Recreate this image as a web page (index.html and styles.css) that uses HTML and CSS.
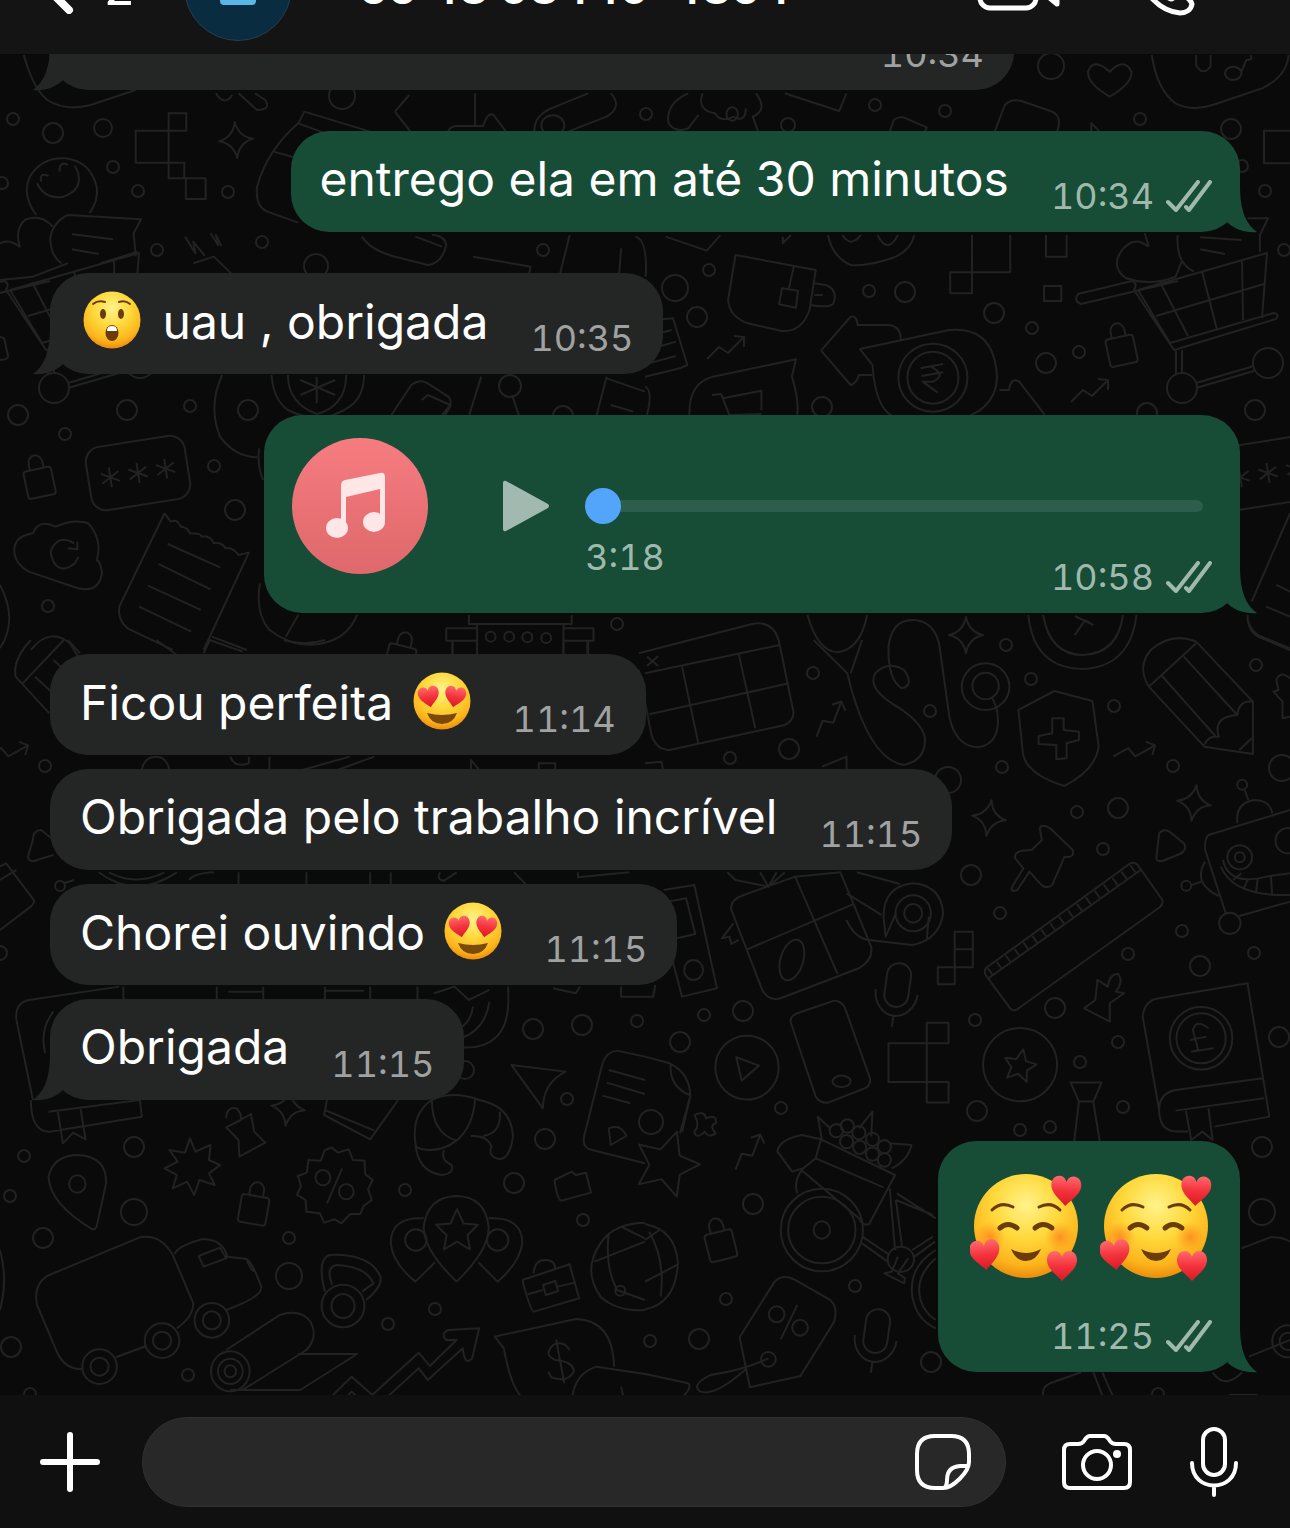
FILE: index.html
```
<!DOCTYPE html>
<html lang="pt-BR">

<head>
    <meta charset="UTF-8">
    <meta name="viewport" content="width=device-width, initial-scale=1">
    <title>Chat</title>
    <link rel="stylesheet" href="styles.css">
</head>

<body>
    <!-- shared shapes -->
    <svg class="defs" width="0" height="0" aria-hidden="true">
        <defs>
            <radialGradient id="face" cx="50%" cy="30%" r="72%">
                <stop offset="0" stop-color="#fff38a" />
                <stop offset="0.45" stop-color="#ffd83a" />
                <stop offset="0.8" stop-color="#fcb41c" />
                <stop offset="1" stop-color="#e8860c" />
            </radialGradient>
            <radialGradient id="blush">
                <stop offset="0" stop-color="#ff7a1a" stop-opacity="0.7" />
                <stop offset="1" stop-color="#ff8a1a" stop-opacity="0" />
            </radialGradient>
            <linearGradient id="red" x1="0" y1="0" x2="0" y2="1">
                <stop offset="0" stop-color="#ff6a6e" />
                <stop offset="0.5" stop-color="#f4323c" />
                <stop offset="1" stop-color="#d81a26" />
            </linearGradient>
            <path id="heart" fill="url(#red)" d="M0 15C-5 9-15 3-15-6C-15-12-11-15-7-15C-3-15-1-12 0-9C1-12 3-15 7-15C11-15 15-12 15-6C15 3 5 9 0 15Z" />
            <symbol id="astonished" viewBox="0 0 58 58">
                <circle cx="29" cy="29" r="28.5" fill="url(#face)" />
                <g fill="none" stroke="#6b3c0a" stroke-width="2" stroke-linecap="round">
                    <path d="M10 13Q15 9 22 11" />
                    <path d="M36 11Q42 9 47 13" />
                </g>
                <ellipse cx="20" cy="23" rx="3" ry="5" fill="#6b3c0a" />
                <ellipse cx="38" cy="23" rx="3" ry="5" fill="#6b3c0a" />
                <ellipse cx="29" cy="42" rx="6.5" ry="8" fill="#6b3c0a" />
                <path d="M24 40Q24 35 29 35Q34 35 34 40Z" fill="#fff" />
            </symbol>
            <symbol id="heart-eyes" viewBox="0 0 58 58">
                <circle cx="29" cy="29" r="28.5" fill="url(#face)" />
                <use href="#heart" transform="translate(16 25) rotate(-10) scale(.7)" />
                <use href="#heart" transform="translate(42 25) rotate(10) scale(.7)" />
                <path d="M14 41Q29 45 44 41Q40 52 29 52Q18 52 14 41Z" fill="#7a4a0c" />
            </symbol>
            <symbol id="love" viewBox="0 0 112 108">
                <circle cx="56" cy="52" r="52" fill="url(#face)" />
                <circle cx="20" cy="63" r="15" fill="url(#blush)" />
                <circle cx="90" cy="63" r="15" fill="url(#blush)" />
                <g fill="none" stroke="#6b3c0a" stroke-linecap="round">
                    <path d="M22 36Q31 27 43 33" stroke-width="3" />
                    <path d="M69 33Q81 27 90 36" stroke-width="3" />
                    <path d="M30 54Q38 47 47 54" stroke-width="5" />
                    <path d="M65 54Q73 47 82 54" stroke-width="5" />
                </g>
                <path d="M41 75Q56 83 71 75Q66 87 56 87Q46 87 41 75Z" fill="#6b3c0a" />
                <use href="#heart" transform="translate(96 17) rotate(3)" />
                <use href="#heart" transform="translate(15 81) rotate(-6)" />
                <use href="#heart" transform="translate(92 92)" />
            </symbol>
            <symbol id="ticks" viewBox="0 0 46 32">
                <path d="M2 22L10 30L32 2M20 27L23 30L44 2" fill="none" stroke="currentColor" stroke-width="4" stroke-linecap="round" stroke-linejoin="round" />
            </symbol>
            <symbol id="tail" viewBox="0 0 32 48">
                <path d="M15 0C15 24 20 38 32 47C21 48 10 45 2 37L0 20Z" fill="currentColor" />
            </symbol>
            <!-- wallpaper pieces that repeat -->
            <g id="cart">
                <path d="M1178 281L1081 304Q1073 301 1078 294L1132 281Q1138 283 1134 290L1174 350L1276 319Q1280 314 1274 313L1170 343L1138 290M1138 290L1267 253L1262 318M1160 282L1188 336M1202 271L1217 330M1242 260L1243 320M1156 316L1264 284" />
                <path d="M1176 351V374M1182 350V373M1196 383L1254 366M1196 388L1254 371" />
                <circle cx="1182" cy="388" r="15" />
                <circle cx="1268" cy="363" r="15" />
            </g>
            <g id="lock">
                <rect x="-14" y="-6" width="28" height="28" rx="3" />
                <path d="M-7-6V-12A7 8 0 0 1 7-12V-6" />
            </g>
            <path id="spark" d="M0-18Q3-3 17 0Q3 3 0 18Q-3 3-17 0Q-3-3 0-18Z" />
            <path id="trend" d="M-19 12L-7 0L2 6L18-10M8-11L18-10L18 0" />
            <path id="star" d="M0-16L5-5L16-4L8 4L10 15L0 9L-10 15L-8 4L-16-4L-5-5Z" />
            <g id="mic-doodle">
                <rect x="-12" y="-27" width="24" height="44" rx="12" />
                <path d="M-21 2A21 24 0 0 0 21 2M0 26V37" />
            </g>
            <g id="stars-box">
                <rect x="-50" y="-32" width="100" height="64" rx="15" />
                <path d="M-28-10V10M-37-5L-19 5M-37 5L-19-5M0-10V10M-9-5L9 5M-9 5L9-5M28-10V10M19-5L37 5M19 5L37-5" />
            </g>
        </defs>
    </svg>

    <header class="topbar">
        <div class="contact">
            <a class="back" href="#" aria-label="Voltar">
                <svg width="34" height="54" viewBox="0 0 34 54">
                    <path d="M29 4L6 27L29 50" />
                </svg>
                <span>2</span>
            </a>
            <div class="avatar">
                <svg width="36" height="42" viewBox="0 0 36 42">
                    <circle cx="18" cy="9" r="9" />
                    <rect x="0" y="22" width="36" height="17" rx="4" />
                </svg>
            </div>
            <h1>+55 48 98449-4854</h1>
            <nav class="calls">
                <button type="button" aria-label="Chamada de vídeo">
                    <svg width="84" height="48" viewBox="0 0 84 48">
                        <rect x="3" y="3" width="56" height="42" rx="10" />
                        <path d="M64 21L80 7V41L64 28Z" />
                    </svg>
                </button>
                <button type="button" aria-label="Chamada de voz">
                    <svg width="58" height="58" viewBox="0 0 58 58">
                        <path d="M3 14C3 8 9 3 14 3C18 4 22 12 22 17C21 21 17 22 18 26C22 33 27 38 34 41C37 41 39 36 43 36C48 37 54 42 55 46C54 52 49 55 43 55C22 53 5 34 3 14Z" />
                    </svg>
                </button>
            </nav>
        </div>
    </header>

    <main class="chat">
        <svg class="wallpaper" viewBox="0 54 1290 1341" preserveAspectRatio="xMinYMax slice" aria-hidden="true">
            <!-- dots -->
            <g>
                <circle cx="13" cy="119" r="6" /><circle cx="53" cy="133" r="10" /><circle cx="103" cy="128" r="9" />
                <circle cx="113" cy="167" r="6" /><circle cx="138" cy="191" r="6" /><circle cx="228" cy="192" r="6" />
                <circle cx="157" cy="250" r="6" /><circle cx="262" cy="242" r="6" /><circle cx="342" cy="96" r="13" />
                <circle cx="316" cy="266" r="12" /><circle cx="2" cy="183" r="6" /><circle cx="646" cy="114" r="6" />
                <circle cx="1051" cy="66" r="13" /><circle cx="875" cy="105" r="6" /><circle cx="945" cy="111" r="6" />
                <circle cx="788" cy="125" r="7" /><circle cx="1140" cy="119" r="6" /><circle cx="1231" cy="129" r="10" />
                <circle cx="1265" cy="191" r="6" /><circle cx="1284" cy="250" r="6" /><circle cx="1242" cy="166" r="6" />
                <circle cx="18" cy="415" r="10" /><circle cx="127" cy="410" r="10" /><circle cx="190" cy="406" r="6" />
                <circle cx="248" cy="410" r="10" /><circle cx="65" cy="434" r="6" /><circle cx="214" cy="466" r="6" />
                <circle cx="235" cy="510" r="10" /><circle cx="48" cy="606" r="6" /><circle cx="510" cy="386" r="11" />
                <circle cx="617" cy="624" r="6" /><circle cx="563" cy="416" r="10" /><circle cx="675" cy="288" r="13" />
                <circle cx="697" cy="317" r="10" /><circle cx="709" cy="270" r="6" /><circle cx="869" cy="291" r="6" />
                <circle cx="905" cy="292" r="10" /><circle cx="994" cy="313" r="10" /><circle cx="1032" cy="328" r="6" />
                <circle cx="1046" cy="363" r="10" /><circle cx="1079" cy="352" r="6" /><circle cx="1255" cy="410" r="10" />
                <circle cx="822" cy="407" r="10" /><circle cx="1147" cy="413" r="10" /><circle cx="543" cy="250" r="6" />
                <circle cx="813" cy="673" r="6" /><circle cx="930" cy="711" r="6" /><circle cx="1006" cy="645" r="6" />
                <circle cx="1031" cy="679" r="6" /><circle cx="1114" cy="706" r="6" /><circle cx="1256" cy="665" r="6" />
                <circle cx="789" cy="749" r="10" /><circle cx="730" cy="758" r="6" /><circle cx="1002" cy="767" r="6" />
                <circle cx="1173" cy="766" r="6" /><circle cx="1282" cy="768" r="13" /><circle cx="948" cy="780" r="13" />
                <circle cx="1077" cy="812" r="6" /><circle cx="1118" cy="808" r="10" /><circle cx="971" cy="875" r="10" />
                <circle cx="1103" cy="849" r="6" /><circle cx="1000" cy="913" r="6" /><circle cx="1182" cy="931" r="6" />
                <circle cx="1254" cy="953" r="6" /><circle cx="1200" cy="966" r="10" /><circle cx="1128" cy="954" r="6" />
                <circle cx="1055" cy="1008" r="10" /><circle cx="975" cy="1020" r="6" /><circle cx="1118" cy="1042" r="6" />
                <circle cx="1080" cy="1062" r="6" /><circle cx="1279" cy="1037" r="10" /><circle cx="977" cy="1111" r="10" />
                <circle cx="1123" cy="1107" r="6" /><circle cx="781" cy="1108" r="6" /><circle cx="704" cy="1015" r="6" />
                <circle cx="743" cy="1011" r="10" /><circle cx="680" cy="1042" r="10" /><circle cx="1020" cy="1130" r="6" />
                <circle cx="1050" cy="1127" r="6" /><circle cx="45" cy="766" r="6" /><circle cx="533" cy="1029" r="10" />
                <circle cx="582" cy="1025" r="10" /><circle cx="637" cy="1021" r="6" /><circle cx="465" cy="1070" r="9" />
                <circle cx="567" cy="1099" r="6" /><circle cx="0" cy="953" r="7" /><circle cx="24" cy="1156" r="6" />
                <circle cx="134" cy="1147" r="10" /><circle cx="10" cy="1196" r="6" /><circle cx="134" cy="1212" r="13" />
                <circle cx="43" cy="1238" r="10" /><circle cx="289" cy="1238" r="6" /><circle cx="289" cy="1276" r="13" />
                <circle cx="388" cy="1324" r="6" /><circle cx="435" cy="1309" r="6" /><circle cx="405" cy="1190" r="6" />
                <circle cx="514" cy="1183" r="10" /><circle cx="545" cy="1139" r="10" /><circle cx="583" cy="1220" r="6" />
                <circle cx="11" cy="1347" r="10" /><circle cx="188" cy="1375" r="6" /><circle cx="30" cy="1394" r="6" />
                <circle cx="753" cy="1204" r="10" /><circle cx="726" cy="1299" r="6" /><circle cx="855" cy="1286" r="6" />
                <circle cx="699" cy="1339" r="10" /><circle cx="650" cy="1341" r="6" /><circle cx="931" cy="1362" r="10" />
                <circle cx="651" cy="1122" r="12" /><circle cx="1262" cy="1147" r="10" /><circle cx="1262" cy="1212" r="13" />
                <circle cx="1158" cy="1394" r="6" />
            </g>
            <!-- repeated doodles -->
            <use href="#cart" />
            <use href="#cart" x="-1128" />
            <use href="#lock" transform="translate(38 475) rotate(-12)" />
            <use href="#lock" transform="translate(1120 343) rotate(-12)" />
            <use href="#lock" transform="translate(255 1202) rotate(10)" />
            <use href="#lock" transform="translate(719 1238) rotate(-14)" />
            <use href="#lock" transform="translate(402 652) rotate(14)" />
            <use href="#stars-box" transform="translate(138 473) rotate(-9)" />
            <use href="#stars-box" transform="translate(1268 473) rotate(-9)" />
            <use href="#spark" transform="translate(236 140) rotate(-4)" />
            <use href="#spark" transform="translate(966 635)" />
            <use href="#spark" transform="translate(989 818) rotate(8)" />
            <use href="#spark" transform="translate(1194 803) rotate(8)" />
            <use href="#spark" transform="translate(288 1108) rotate(8)" />
            <use href="#trend" transform="translate(726 347)" />
            <use href="#trend" transform="translate(1090 390)" />
            <use href="#trend" transform="translate(829 718) rotate(-24)" />
            <use href="#trend" transform="translate(1135 750) rotate(16)" />
            <use href="#trend" transform="translate(8 750) rotate(16)" />
            <use href="#trend" transform="translate(748 1151) rotate(-24)" />
            <use href="#star" transform="translate(1020 1065) rotate(12)" />
            <use href="#star" transform="translate(457 1230) scale(1.3)" />
            <use href="#star" transform="translate(667 1162) rotate(18) scale(2)" />
            <use href="#mic-doodle" transform="translate(897 990) rotate(8)" />
            <use href="#mic-doodle" transform="translate(876 1336) rotate(8)" />
            <!-- below the header -->
            <g transform="scale(.4113 .3333)">
                <path d="M58 165Q80 265 115 300Q160 335 220 315L330 270M960 335L995 285M960 335L1000 398M1155 280V378H1110Q1090 380 1090 398M1155 378H1175Q1185 335 1200 345L1232 398M1300 398Q1295 350 1340 325L1430 280M1370 400L1475 350Q1515 320 1485 280M525 280Q545 320 565 285M580 280L625 330Q660 330 645 300L620 280" />
                <path d="M330 392H410V488H330ZM410 340H453V392H410ZM410 488H448V535H410ZM452 535H500V597H452ZM900 395L740 335L725 370L860 430M725 370Q650 450 625 560Q620 620 650 635L725 668M665 455L715 472" />
                <ellipse cx="1344" cy="376" rx="28" ry="30" />
                <path d="M88 645Q50 580 75 525Q105 470 160 475Q220 485 235 560Q240 600 218 640M90 550Q110 600 155 590Q200 570 190 520Q185 500 180 498M100 545Q95 515 118 528M145 515Q145 480 165 495" />
                <path d="M165 645L343 658L325 700L330 770M165 645Q125 670 122 720Q125 770 150 790M175 703L275 718M175 748L240 762M245 790L335 755M128 680Q100 640 60 660Q35 690 48 740Q20 715 0 730M0 840L80 830L165 790M450 710L475 760L470 725L498 768M512 700L530 735L525 705L538 738M470 790L520 770L570 830" />
                <path d="M880 710Q900 750 960 770L1040 795Q1075 790 1085 735Q1080 705 1050 705M1010 710L1075 740M1150 770L1290 800L1285 830M1385 705L1360 830M1510 745L1505 830M1545 710Q1575 720 1570 830" />
            </g>
            <g transform="translate(645 0) scale(.4113 .3333)">
                <path d="M1130 290Q1075 250 1077 215Q1090 170 1130 215Q1165 170 1183 215Q1185 250 1130 290ZM1232 165Q1245 270 1290 310Q1330 335 1380 315L1500 265Q1560 230 1565 165M1340 165V195Q1355 230 1375 200V165M1450 215L1462 180Q1480 180 1472 165" />
                <ellipse cx="1430" cy="220" rx="20" ry="20" />
                <path d="M105 280Q50 310 57 370Q75 400 105 385L130 345M140 280Q125 330 170 340Q185 370 215 350Q245 370 245 325M270 280Q300 330 262 350L275 395M340 280L472 333L490 280M595 395L605 360Q620 345 640 358L685 382L680 398M850 395L875 315Q890 295 915 303L990 335Q1015 350 1002 395M1085 395V370L1105 395M1568 392H1505V490H1568" />
                <ellipse cx="212" cy="342" rx="14" ry="20" />
                <path d="M50 710L150 752L183 706M335 710V730L355 705M445 705Q455 770 500 795Q540 800 600 775Q645 755 655 705M480 705Q500 745 525 705M565 705Q590 765 615 705M795 705V817M888 705V817H742V880H795V817M975 705V770H1025V705M1223 740Q1190 705 1160 750Q1130 800 1170 835Q1230 860 1290 830L1305 785M1225 740L1215 700M1465 655H1515L1495 705V755M1295 705Q1290 790 1335 815M1350 748L1410 762M1350 712L1450 720" />
                <rect x="970" y="858" width="42" height="45" />
            </g>
            <!-- around the voice message -->
            <g transform="translate(0 260) scale(.4113 .3333)">
                <path d="M0 230L10 235L20 290Q15 300 0 300M540 345Q505 440 535 530Q570 590 625 592M630 565Q625 620 640 660M660 345Q665 420 700 450Q780 500 850 440Q885 410 885 345M700 345Q700 430 770 462Q840 440 842 345M770 350L770 430M730 360L815 405M730 405L815 360M950 468L1000 375Q1020 355 1040 370L1090 410Q1105 430 1080 468M1025 420L1040 405L1095 435L1075 465M1170 350L1140 468M1245 405L1262 468M1475 350L1450 468M1475 355L1568 395M1485 435L1540 455" />
                <path d="M80 820Q30 830 35 880Q40 915 70 935L190 985Q240 1000 248 940Q245 905 235 900Q250 840 215 790Q180 775 135 800Q95 775 80 820M180 850Q140 820 123 875Q130 930 160 925Q185 915 190 890M165 865L188 868L188 845" />
                <path d="M400 760L290 1040Q285 1080 310 1105L420 1170M400 760L415 785Q430 775 440 800Q455 800 462 820Q490 820 490 830Q510 825 520 850Q540 845 548 865Q565 860 580 885L605 878L495 1170M408 852L535 922M385 912L512 988M360 977L488 1050M338 1040L465 1115M515 1130L600 1170" />
                <path d="M632 970Q620 1060 655 1110Q730 1180 810 1140Q850 1120 868 1065M725 1065L695 1130M0 975Q45 1080 0 1165M75 1170Q120 1100 170 1150L190 1190" />
                <path d="M1140 1065V1092H1390V1065M1085 1105H1160V1142H1085ZM1370 1105H1443V1142H1370M1160 1095V1210M1370 1095V1210M1100 1142V1200M1428 1142V1200" />
                <ellipse cx="1193" cy="1130" rx="12" ry="15" />
                <ellipse cx="1238" cy="1130" rx="12" ry="15" />
                <ellipse cx="1282" cy="1132" rx="12" ry="15" />
                <ellipse cx="1328" cy="1134" rx="12" ry="15" />
            </g>
            <g transform="translate(645 240) scale(.4113 .3333)">
                <path d="M220 45L415 90L400 210Q380 280 330 272L250 250Q205 230 202 180ZM362 78L350 145M333 145L372 152L367 203L326 193ZM412 130L440 135Q470 150 458 190Q450 205 402 195M412 165H432" />
                <path d="M20 240L68 235L103 375L85 385L0 410M20 285L65 270M20 325L75 305M15 368L75 348M0 440Q20 450 5 525" />
                <path d="M428 332L500 230Q515 225 517 255H590Q620 255 622 298M428 332L500 435Q515 430 520 405H552M522 327L740 270Q830 260 850 360Q875 480 790 527M522 327L553 375Q560 500 600 527" />
                <path d="M670 385L725 372M672 408L725 397M695 380Q735 405 700 425L675 425L712 458M862 450H885Q890 410 910 425L972 525" />
                <ellipse cx="700" cy="413" rx="84" ry="102" />
                <ellipse cx="700" cy="413" rx="62" ry="78" />
                <path d="M108 527Q105 430 165 410L367 358L357 410Q375 480 370 525M163 465L185 462L205 525L283 522M190 475L283 452L283 510" />
                <path d="M1568 820L1475 1085M1535 1035L1568 1055M1510 1100L1568 1130M1465 1125Q1465 1180 1500 1195L1568 1230" />
            </g>
            <!-- right side, middle -->
            <g transform="translate(645 620) scale(.4113 .3333)">
                <path d="M-15 100L260 12Q310 0 325 60L360 270Q365 300 340 315L60 390Q25 390 15 340L-15 150M0 160L328 75M10 283L350 190M90 140L130 372M228 103L268 325M5 110L32 138M32 108L5 138" />
                <path d="M395 -15Q420 95 470 97Q525 85 540 -15M410 60L492 160L500 200M528 60L500 160M500 200Q550 420 630 435Q685 420 680 350Q670 300 600 250Q540 200 560 160Q590 120 630 150Q655 195 625 205Q590 180 592 80Q600 0 650 0Q700 0 715 70L740 290Q755 380 810 382Q870 370 855 265L845 235" />
                <ellipse cx="828" cy="200" rx="58" ry="70" />
                <ellipse cx="828" cy="198" rx="32" ry="40" />
                <path d="M932 -15Q945 145 1065 147Q1180 140 1195 -15M968 -15Q985 105 1065 105Q1150 100 1162 -15M1045 45L1070 0L1090 15M1045 -12L1090 15" />
                <path d="M908 270L995 213L1088 243L1103 380Q1095 450 1020 498Q920 460 918 390ZM990 295H1018V330L1055 335V360L1025 370V415L1000 418V375L957 372V348L990 340Z" />
                <path d="M1225 200Q1195 140 1230 90Q1280 35 1340 65L1478 245V402L1360 380ZM1225 200L1340 70M1255 165L1388 350M1310 110L1440 285M1360 375Q1370 345 1395 350Q1380 290 1440 285Q1445 240 1475 245M1445 390L1475 355" />
                <path d="M1465 0Q1475 40 1500 50L1568 85M1568 175Q1545 150 1535 180L1540 210L1528 215L1550 245V295L1568 290M0 430L40 425L45 455M430 440L490 410V450" />
                <path d="M960 625Q965 610 985 625L1040 690Q1045 715 1020 710L990 795Q975 810 960 790L935 755L905 810Q885 820 895 795L920 745L900 715Q895 690 940 690L965 660Z" />
                <path d="M1243 715L1250 640Q1260 625 1275 635L1310 670Q1320 690 1300 702L1258 723Q1243 725 1243 715M828 1045L1180 730Q1190 725 1198 735L1258 840Q1260 855 1248 865L905 1168Q895 1175 888 1165L828 1065Q825 1055 828 1045ZM835 1075L1205 750" />
                <path class="rule" d="M838 1058L1188 745" />
                <path d="M1568 570L1370 645Q1360 655 1362 690L1412 880M1445 888L1568 845M1440 610Q1435 550 1480 540Q1520 540 1525 580M1467 540L1458 510M1362 725Q1330 790 1395 828M1330 795L1352 785M1405 720Q1420 800 1510 770L1568 760M1400 740Q1430 830 1568 825M1430 780L1450 760M1455 808L1467 775M1485 820L1490 775M1525 828L1522 770" />
                <ellipse cx="1452" cy="494" rx="12" ry="15" />
                <ellipse cx="1446" cy="712" rx="30" ry="36" />
                <ellipse cx="1446" cy="712" rx="12" ry="15" />
                <ellipse cx="1316" cy="797" rx="12" ry="15" />
                <ellipse cx="1422" cy="910" rx="26" ry="32" />
                <ellipse cx="1563" cy="662" rx="30" ry="38" />
                <path d="M45 810L120 795L175 1105L90 1130L60 990M55 845L100 835L122 942L78 955M0 1130L20 1130L25 1095" />
                <ellipse cx="118" cy="1050" rx="23" ry="30" />
                <path d="M200 757L220 780L300 800L340 757M280 757L300 800L320 757M210 870Q205 840 240 825L365 770L475 757L550 980Q555 1020 520 1045L330 1135Q300 1145 285 1110ZM365 770L468 1062M245 990L505 853M215 910L187 955L205 950L210 972L228 960" />
                <path d="M515 757L620 792M490 820L575 885M490 900Q510 955 545 960L650 975Q715 960 725 880Q720 795 650 790Q580 800 580 890L585 950L610 880M685 960L690 890" />
                <ellipse cx="357" cy="1020" rx="28" ry="62" transform="rotate(12 357 1020)" />
                <ellipse cx="652" cy="880" rx="43" ry="54" />
                <ellipse cx="652" cy="880" rx="22" ry="28" />
                <path d="M753 935H797V1042H753ZM753 988H797M712 1042H753V1093H712ZM685 1208H738V1270H592V1386H738V1448H685Z" />
                <path d="M355 1210Q350 1190 370 1180L460 1142Q475 1142 485 1160L547 1375Q550 1395 535 1405L445 1448Q425 1450 415 1430ZM222 1312L277 1337L235 1382Z" />
                <ellipse cx="478" cy="1384" rx="22" ry="17" />
                <ellipse cx="248" cy="1343" rx="77" ry="96" />
                <ellipse cx="912" cy="1334" rx="90" ry="110" />
                <path d="M1100 1080L1125 1100Q1130 1060 1150 1062Q1165 1080 1145 1115L1165 1120L1130 1150V1205L1068 1165L1095 1140ZM1035 1388H1110L1090 1445H1055ZM1055 1445L1040 1600M1090 1445L1110 1600" />
                <path d="M1250 1470L1210 1190Q1215 1140 1250 1135L1465 1090L1518 1490L1385 1520M1250 1470Q1250 1420 1290 1410L1502 1375M1250 1470Q1250 1530 1290 1535H1320M1290 1472L1505 1435M1315 1472L1328 1560L1355 1535L1380 1560L1370 1465M1370 1225Q1340 1195 1332 1230L1345 1290L1330 1295L1382 1285M1325 1260L1365 1250" />
                <ellipse cx="1352" cy="1255" rx="76" ry="94" />
                <ellipse cx="1352" cy="1255" rx="60" ry="75" />
                <path d="M0 1310L60 1330Q110 1360 110 1430L85 1540M62 1335Q60 1400 108 1425" />
            </g>
            <!-- left side, middle -->
            <g transform="translate(0 640) scale(.4113 .3333)">
                <path d="M75 0Q30 60 38 110L120 220M155 0L55 130M165 0L195 40M85 110L125 155M130 60L165 100M380 0L430 45M510 0L495 40M510 0L590 35M690 0Q740 20 790 0M1100 0V45M1160 0V45M1370 0V45M1430 0V45M345 390Q350 350 380 350Q405 350 412 390M560 350Q570 385 605 370V350M655 350V390M735 390L850 350M820 390L910 350M1145 390V360L1165 390M1310 390V370H1350V390" />
                <path d="M130 600L100 570Q80 570 80 600L68 650Q70 670 90 660L130 645M0 680L15 670L82 780Q85 790 75 800L0 870M0 720L40 690M155 730L180 720M240 697Q330 780 430 697M265 697Q330 740 400 697M580 697V735M745 697V735M900 697V735M950 697V735M460 720Q470 700 520 697M1070 697Q1060 720 1080 722L1110 697M1250 697L1280 735M1405 697V712L1530 697" />
                <ellipse cx="146" cy="738" rx="12" ry="15" />
                <path d="M290 1040L70 1080Q35 1090 40 1140L80 1380M130 1115Q95 1170 110 1240M300 1040V1078M527 1040V1078M640 1040V1078M555 1055H640M790 1040V1078M790 1052H885M900 1040V1078M1015 1040V1078M1055 1060L1105 1040L1140 1080L1190 1050M1235 1040Q1240 1130 1220 1170Q1190 1230 1115 1222M1110 1170Q1145 1150 1150 1100M1120 1195Q1180 1170 1190 1085M1345 1045L1400 1060L1410 1040M1510 1040V1070H1568" />
                <path d="M1243 1275L1375 1295Q1320 1330 1320 1405ZM1568 1250L1500 1232Q1475 1235 1465 1270L1420 1490Q1415 1525 1440 1530L1568 1570M1480 1290L1568 1320M1475 1328L1568 1362M1465 1367L1532 1390" />
            </g>
            <!-- bottom left -->
            <g transform="translate(0 1100) scale(.4113 .3333)">
                <path d="M75 0Q75 95 120 95L345 50L340 0M118 35L340 0M140 30L153 130L178 98L208 118L195 20M550 55Q550 20 575 25Q590 45 585 60L610 42L618 95L645 128L582 170L580 120L550 82L585 60M795 0L788 45L900 118L968 0M790 30L910 92" />
                <path d="M1010 130Q1000 40 1050 0Q1100 -30 1165 0M1050 0Q1050 100 1110 122Q1150 80 1155 0M1165 0Q1245 20 1247 110Q1240 175 1215 178Q1185 170 1195 140Q1185 105 1145 108M1110 122Q1080 150 1045 150Q1010 150 1010 130Q1015 215 1075 225Q1105 220 1098 195Q1070 180 1080 150M1215 35Q1220 100 1175 108" />
                <path d="M225 388Q120 310 118 230Q130 165 190 165Q260 170 258 250L235 380Q230 390 225 388Z" />
                <ellipse cx="188" cy="252" rx="20" ry="26" />
                <path d="M462 115L475 155L512 135L508 180L535 195L508 220L522 255L485 240L472 285L455 245L420 265L430 225L400 205L432 185L412 150L450 158Z" />
                <path d="M806 143L822 158L848 148L858 180L886 182L888 222L906 240L895 268L904 300L884 318L876 342L852 342L830 370L814 358L788 368L778 340L745 335L743 300L722 285L732 258L724 228L746 218L750 180L780 182L790 150Z" />
                <path d="M832 205L795 310" />
                <ellipse cx="785" cy="233" rx="18" ry="23" />
                <ellipse cx="842" cy="275" rx="18" ry="23" />
                <path d="M1110 545Q1030 450 1030 380Q1040 290 1110 288Q1180 290 1188 380Q1190 450 1110 545M1030 355Q950 350 950 430Q955 490 1010 545L1058 487M1188 355Q1270 350 1270 430Q1262 490 1210 545L1163 487" />
                <ellipse cx="1011" cy="420" rx="26" ry="32" />
                <ellipse cx="1210" cy="420" rx="26" ry="32" />
                <path d="M1348 240L1390 215L1400 225L1425 218L1437 278L1365 302Q1355 300 1348 240M1270 540L1385 493L1408 595L1298 635Q1290 635 1270 540M1297 520Q1300 480 1325 480Q1350 480 1350 508M1283 583L1320 570M1355 560L1398 548M1320 555L1350 543L1357 573L1327 585Z" />
                <path d="M120 525L340 412Q390 400 420 465L470 610Q470 650 430 685M120 525Q80 550 90 615L140 760Q160 810 200 807M282 772L355 738M425 462Q430 440 490 418Q540 415 553 470L600 477Q615 490 635 560Q640 590 550 630M483 468L535 443L550 475L495 500ZM600 480Q615 520 618 512" />
                <ellipse cx="242" cy="800" rx="42" ry="52" /><ellipse cx="242" cy="800" rx="22" ry="27" />
                <ellipse cx="394" cy="722" rx="42" ry="52" /><ellipse cx="394" cy="722" rx="22" ry="27" />
                <ellipse cx="515" cy="661" rx="42" ry="52" /><ellipse cx="515" cy="661" rx="22" ry="27" />
                <path d="M790 575Q770 480 800 465Q900 460 925 530Q930 560 890 600M808 555Q790 500 820 495Q890 500 908 550L880 575" />
                <ellipse cx="834" cy="618" rx="52" ry="64" /><ellipse cx="834" cy="618" rx="28" ry="36" />
                <path d="M550 750L680 645Q730 625 755 665Q775 710 745 750L590 870M725 762H868L730 870H560" />
                <ellipse cx="560" cy="814" rx="47" ry="60" /><ellipse cx="560" cy="814" rx="30" ry="38" /><ellipse cx="560" cy="814" rx="14" ry="18" />
                <path d="M808 887L855 830L905 885L1018 758L1045 798L1110 720H1085Q1070 700 1090 690L1165 685L1148 775Q1130 800 1125 745L1040 840L1018 805L945 887M845 887L855 875L865 887" />
                <path d="M1265 887Q1240 850 1225 745L1203 710L1400 657Q1490 660 1493 800M1392 887Q1400 820 1450 800L1568 822M1510 860L1515 887M1385 750Q1370 720 1345 735Q1320 765 1350 780Q1395 785 1395 815Q1380 850 1340 832L1333 815M1352 718L1372 850" />
                <path d="M1568 368Q1490 370 1460 430Q1415 510 1460 590Q1500 635 1568 630M1445 485L1568 425M1480 400Q1470 500 1500 570L1568 600M1510 380L1568 415" />
                <path d="M1480 85Q1510 70 1523 108L1485 135ZM0 450Q20 540 0 630" />
                <ellipse cx="1508" cy="572" rx="12" ry="15" />
            </g>
            <!-- bottom right -->
            <g transform="translate(645 1100) scale(.4113 .3333)">
                <path d="M0 372Q75 390 80 490Q75 610 0 628M0 420L35 390M0 545L78 495M10 395Q50 480 38 590" />
                <path d="M120 45Q145 30 148 55Q175 40 172 70Q155 75 172 100Q155 115 145 95Q125 120 120 95Q135 75 120 45M108 0L90 95" />
                <path d="M428 118L608 225L545 372Q530 380 520 355L380 210M428 118L415 175L580 262M428 118L380 105Q325 120 322 155L358 215L385 205L415 175M385 205Q360 240 370 280M430 118L420 50L450 85M520 85L553 35L550 110M600 205Q640 180 648 135L595 130M595 265L608 450M610 300L625 440M612 280L707 355M610 300L700 345M528 410L595 465M528 430L590 485M650 450L700 410M655 470L705 425" />
                <!-- berries in the bicycle basket -->
                <ellipse cx="465" cy="92" rx="16" ry="20" /><ellipse cx="492" cy="78" rx="16" ry="20" />
                <ellipse cx="520" cy="98" rx="16" ry="20" /><ellipse cx="490" cy="125" rx="16" ry="20" />
                <ellipse cx="522" cy="142" rx="16" ry="20" /><ellipse cx="553" cy="118" rx="16" ry="20" />
                <ellipse cx="582" cy="140" rx="16" ry="20" /><ellipse cx="553" cy="162" rx="16" ry="20" />
                <ellipse cx="582" cy="180" rx="16" ry="20" />
                <ellipse cx="430" cy="390" rx="100" ry="124" /><ellipse cx="430" cy="390" rx="82" ry="100" /><ellipse cx="430" cy="390" rx="20" ry="26" />
                <ellipse cx="622" cy="478" rx="32" ry="38" />
                <path d="M615 470L600 515L582 520L630 550L632 535L615 520L640 475M707 450Q640 500 650 590Q660 660 707 685M707 475Q655 530 670 600Q680 640 707 660" />
                <path d="M315 545Q335 520 365 540L450 600Q470 620 460 665L378 828L255 862L230 712ZM370 615L330 718M300 775Q240 810 160 825Q110 855 135 875Q170 890 245 808" />
                <ellipse cx="320" cy="643" rx="19" ry="24" /><ellipse cx="377" cy="683" rx="19" ry="24" /><ellipse cx="300" cy="778" rx="18" ry="22" />
                <path d="M0 822L105 850Q115 860 95 887M968 887Q965 860 985 850L1060 817M1090 817L1112 887M1112 817L1137 887M1380 817Q1410 870 1452 817M1450 445L1520 412Q1550 410 1568 425M1468 770L1568 720M1420 885H1490" />
                <ellipse cx="1563" cy="724" rx="38" ry="48" /><ellipse cx="1563" cy="724" rx="20" ry="26" />
            </g>
        </svg>

        <div class="bubble in long tailed">
            <time>10:34</time>
            <svg class="tail"><use href="#tail" /></svg>
        </div>

        <div class="bubble out tailed">
            <p>entrego ela em até 30 minutos</p>
            <span class="meta"><time>10:34</time><svg class="ticks"><use href="#ticks" /></svg></span>
            <svg class="tail"><use href="#tail" /></svg>
        </div>

        <div class="bubble in tailed">
            <p><svg class="emoji first" role="img" aria-label="😲"><use href="#astonished" /></svg> uau , obrigada</p>
            <time>10:35</time>
            <svg class="tail"><use href="#tail" /></svg>
        </div>

        <div class="bubble out voice tailed">
            <div class="album">
                <svg width="60" height="68" viewBox="0 0 60 68">
                    <ellipse cx="11" cy="56" rx="11" ry="10" />
                    <ellipse cx="48" cy="50" rx="11" ry="10" />
                    <path d="M15 13Q15 9 19 8L54 1Q59 0 59 5V50H54V17L20 25V56H15Z" />
                </svg>
            </div>
            <button class="play" type="button" aria-label="Reproduzir">
                <svg width="48" height="52" viewBox="0 0 48 52">
                    <path d="M1 3Q1 0 4 1L46 24Q48 26 46 28L4 51Q1 52 1 49Z" />
                </svg>
            </button>
            <div class="track">
                <input type="range" min="0" max="198" value="0" aria-label="Posição do áudio">
                <span class="duration">3:18</span>
            </div>
            <span class="meta"><time>10:58</time><svg class="ticks"><use href="#ticks" /></svg></span>
            <svg class="tail"><use href="#tail" /></svg>
        </div>

        <div class="bubble in">
            <p>Ficou perfeita <svg class="emoji" role="img" aria-label="😍"><use href="#heart-eyes" /></svg></p>
            <time>11:14</time>
        </div>

        <div class="bubble in next">
            <p>Obrigada pelo trabalho incrível</p>
            <time>11:15</time>
        </div>

        <div class="bubble in next">
            <p>Chorei ouvindo <svg class="emoji" role="img" aria-label="😍"><use href="#heart-eyes" /></svg></p>
            <time>11:15</time>
        </div>

        <div class="bubble in next tailed">
            <p>Obrigada</p>
            <time>11:15</time>
            <svg class="tail"><use href="#tail" /></svg>
        </div>

        <div class="bubble out big tailed">
            <div class="faces">
                <svg role="img" aria-label="🥰"><use href="#love" /></svg>
                <svg role="img" aria-label="🥰"><use href="#love" /></svg>
            </div>
            <span class="meta"><time>11:25</time><svg class="ticks"><use href="#ticks" /></svg></span>
            <svg class="tail"><use href="#tail" /></svg>
        </div>
    </main>

    <footer class="composer">
        <button type="button" aria-label="Anexar">
            <svg width="60" height="60" viewBox="0 0 60 60">
                <path d="M30 3V57M3 30H57" stroke-width="6" />
            </svg>
        </button>
        <div class="field">
            <input type="text" aria-label="Mensagem">
            <button type="button" aria-label="Figurinhas">
                <svg width="56" height="56" viewBox="0 0 56 56">
                    <path d="M20 2H36Q54 2 54 20V28C54 38 38 54 28 54H20Q2 54 2 36V20Q2 2 20 2ZM52 32H45Q32 33 32 46Q32 52 29 54" stroke-width="4" />
                </svg>
            </button>
        </div>
        <button class="camera" type="button" aria-label="Câmera">
            <svg width="70" height="56" viewBox="0 0 70 56">
                <path d="M8 10H16Q20 10 22 7Q25 2 28 2H42Q45 2 48 7Q50 10 54 10H62Q68 10 68 16V48Q68 54 62 54H8Q2 54 2 48V16Q2 10 8 10Z" stroke-width="4" />
                <circle cx="35" cy="31" r="14" stroke-width="4" />
                <circle class="dot" cx="55" cy="20" r="4" />
            </svg>
        </button>
        <button type="button" aria-label="Gravar áudio">
            <svg width="48" height="70" viewBox="0 0 48 70">
                <rect x="13" y="2" width="22" height="46" rx="11" stroke-width="4" />
                <path d="M2 36C2 66 46 66 46 36M24 59V68" stroke-width="4" />
            </svg>
        </button>
    </footer>
</body>

</html>
```

FILE: styles.css
```
* {
    box-sizing: border-box;
}

body {
    margin: 0;
    height: 100vh;
    display: flex;
    flex-direction: column;
    background: #0a0a0a;
    color: #fff;
    font-family: Inter, "Liberation Sans", sans-serif;
    overflow: hidden;
}

.defs {
    position: absolute;
}

svg {
    display: block;
}

button {
    padding: 0;
    border: none;
    background: none;
    color: inherit;
    cursor: pointer;
}

h1,
p {
    margin: 0;
}

/* header */
.topbar {
    flex: none;
    height: 54px;
    padding: 0 95px 13px 40px;
    display: flex;
    align-items: flex-end;
    background: #141414;
    overflow: hidden;
}

.contact {
    flex: 1;
    height: 108px;
    display: flex;
    align-items: center;
}

.contact svg {
    fill: none;
    stroke: #fff;
    stroke-width: 5;
    stroke-linecap: round;
    stroke-linejoin: round;
}

.back {
    width: 144px;
    display: flex;
    align-items: center;
    gap: 30px;
    color: #fff;
    font-size: 50px;
    text-decoration: none;
}

.contact .back svg {
    stroke-width: 8;
}

.avatar {
    width: 108px;
    height: 108px;
    display: flex;
    align-items: center;
    justify-content: center;
    border: 1px solid #24404e;
    border-radius: 50%;
    background: #0a2c40;
}

.contact .avatar svg {
    fill: #58b7e6;
    stroke: none;
}

.contact h1 {
    margin-left: 36px;
    font-size: 46px;
    font-weight: 600;
    white-space: nowrap;
}

.calls {
    margin-left: auto;
    display: flex;
    align-items: center;
    gap: 76px;
}

/* messages */
.chat {
    position: relative;
    flex: 1;
    min-height: 0;
    padding: 0 50px 23px;
    display: flex;
    flex-direction: column;
    justify-content: flex-end;
    gap: 41px;
    overflow: hidden;
}

.wallpaper {
    position: absolute;
    inset: 0;
    width: 100%;
    height: 100%;
    fill: none;
    stroke: #222;
    stroke-width: 2;
    stroke-linejoin: round;
}

.wallpaper g > *,
.defs path {
    vector-effect: non-scaling-stroke;
}

.wallpaper .rule {
    stroke-width: 9;
    stroke-dasharray: 2 9;
}

.bubble {
    position: relative;
    flex: none;
    align-self: flex-start;
    min-height: 101px;
    padding: 18px 30px 14px;
    display: flex;
    align-items: flex-end;
    gap: 42px;
    border-radius: 38px;
    background: #242626;
    color: #242626;
}

.bubble.out {
    align-self: flex-end;
    padding: 18px 28px 14px;
    background: #174c37;
    color: #174c37;
}

.bubble.next {
    margin-top: -27px;
}

.bubble.long {
    width: 81%;
    justify-content: flex-end;
}

.bubble p {
    align-self: flex-start;
    color: #fff;
    font-size: 48px;
    line-height: 60px;
    white-space: nowrap;
}

.bubble time,
.duration {
    color: #a0a1a1;
    font-size: 36px;
    line-height: 44px;
    font-variant-numeric: tabular-nums;
}

.bubble.out time,
.bubble.out .duration,
.meta {
    color: #9fb9ad;
}

.meta {
    display: flex;
    align-items: center;
    gap: 12px;
}

.ticks {
    width: 46px;
    height: 32px;
}

.emoji {
    display: inline-block;
    width: 58px;
    height: 58px;
    margin-left: 6px;
    vertical-align: -10px;
}

.emoji.first {
    margin: 0 8px 0 3px;
}

.tail {
    position: absolute;
    bottom: -1px;
    left: -17px;
    width: 32px;
    height: 48px;
    transform: scaleX(-1);
}

.out .tail {
    left: auto;
    right: -17px;
    transform: none;
}

.bubble.big {
    flex-direction: column;
    gap: 32px;
    padding: 33px 28px 14px 32px;
}

.faces {
    display: flex;
    gap: 18px;
}

.faces svg {
    width: 112px;
    height: 108px;
}

/* voice message */
.bubble.voice {
    width: 82%;
    min-height: 198px;
    padding: 23px 28px 14px;
    display: grid;
    grid-template-columns: 136px 122px 1fr;
    gap: 0;
    align-items: start;
}

.album {
    width: 136px;
    height: 136px;
    padding-right: 8px;
    display: flex;
    align-items: center;
    justify-content: center;
    border-radius: 50%;
    background: linear-gradient(#f67c80, #de686b);
    fill: #ffe6e7;
}

.play {
    height: 136px;
    justify-self: end;
    fill: #a2b9af;
}

.track {
    grid-area: 1 / 3;
    margin: 50px 9px 0 35px;
}

.track input {
    display: block;
    appearance: none;
    width: 100%;
    height: 36px;
    margin: 0;
    background: none;
}

.track input::-webkit-slider-runnable-track {
    height: 12px;
    border-radius: 6px;
    background: #2c5e4b;
}

.track input::-webkit-slider-thumb {
    appearance: none;
    width: 36px;
    height: 36px;
    margin-top: -12px;
    border-radius: 50%;
    background: #52a5fb;
}

.duration {
    display: block;
    margin-top: 11px;
}

.voice .meta {
    grid-area: 1 / 3;
    justify-self: end;
    align-self: end;
}

/* footer */
.composer {
    flex: none;
    padding: 22px 52px 21px 40px;
    display: flex;
    align-items: center;
    background: #101010;
}

.composer svg {
    fill: none;
    stroke: #fff;
    stroke-linecap: round;
    stroke-linejoin: round;
}

.composer .dot {
    fill: #fff;
    stroke: none;
}

.field {
    flex: 1;
    min-width: 0;
    height: 90px;
    margin: 0 56px 0 42px;
    padding: 0 34px 0 40px;
    display: flex;
    align-items: center;
    border: 1px solid #303030;
    border-radius: 45px;
    background: #282828;
}

.field input {
    flex: 1;
    min-width: 0;
    border: none;
    outline: none;
    background: none;
    color: #fff;
    font: inherit;
    font-size: 48px;
}

.camera {
    margin-right: 58px;
}
```
